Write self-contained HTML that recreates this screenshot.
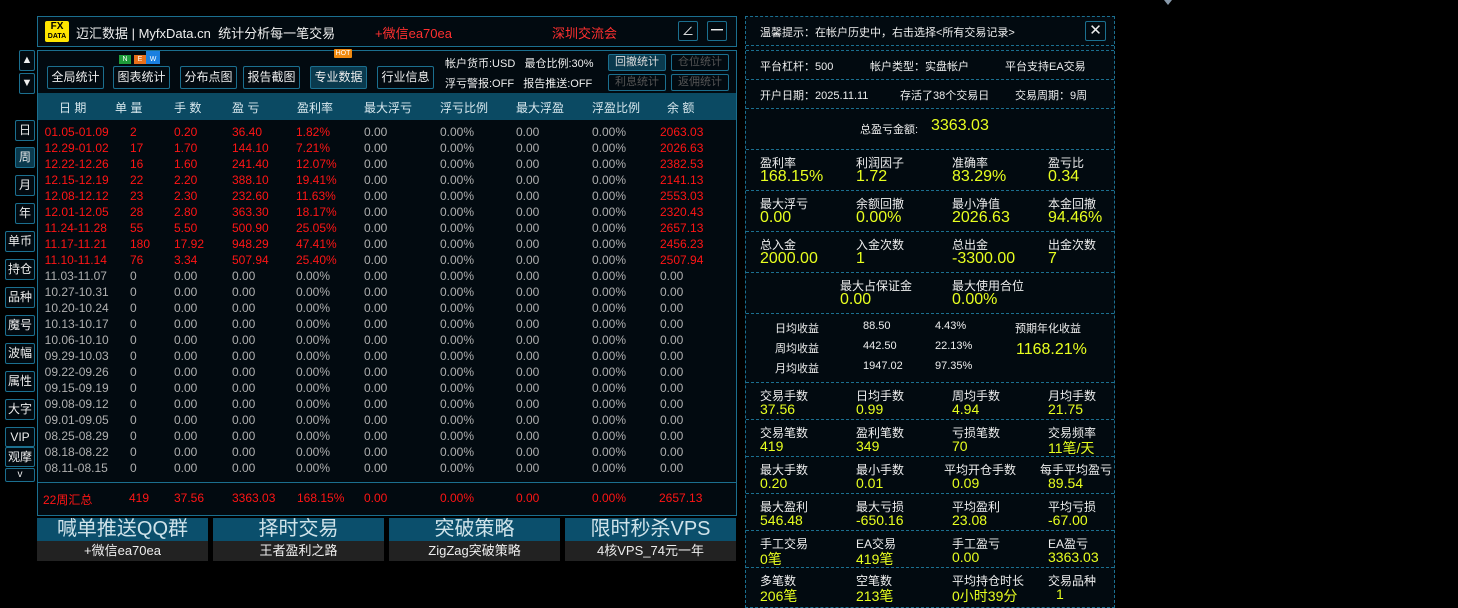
<!DOCTYPE html><html><head><meta charset="utf-8"><style>
*{margin:0;padding:0;box-sizing:border-box}
body{width:1458px;height:606px;background:#000;position:relative;overflow:hidden;font-family:"Liberation Sans","Noto Sans CJK SC",sans-serif;color:#e8e8e8;font-size:12px}
.a{position:absolute;white-space:nowrap}
.box{position:absolute;border:1px solid #1b6f8f;background:#020a10}
.btn{position:absolute;border:1px solid #1b6f8f;background:#020a10;color:#eee;text-align:center;font-size:12px;border-radius:2px}
.tb{position:absolute;top:66px;height:23px;line-height:21px;border:1px solid #1b6f8f;color:#eee;text-align:center;font-size:12px;border-radius:2px}
.sm{position:absolute;height:17px;line-height:15px;width:58px;border:1px solid #1b6f8f;font-size:11px;text-align:center;color:#555;border-radius:2px}
table{position:absolute;left:38px;top:124px;border-collapse:collapse;font-size:12px}
td{height:16px;padding:0;white-space:nowrap}
.r td{color:#ff1515}.g td{color:#b0b0b0}
.rp{position:absolute;left:745px;top:16px;width:370px;height:592px;border:1px dashed #1b6f8f;background:#020a10}
.hl{position:absolute;left:746px;width:368px;border-top:1px dashed #1b6f8f}
.l{position:absolute;font-size:12px;color:#eee;white-space:nowrap}
.v{position:absolute;font-size:16px;color:#e8ff20;white-space:nowrap}
.ad{position:absolute;top:518px;width:171px}
.ad .t{background:#0b4f6c;height:23px;line-height:23px;text-align:center;color:#cfe3ea;font-size:20px}
.ad .b{background:#222;height:20px;line-height:20px;text-align:center;color:#eee;font-size:13px}
</style></head><body>
<div class="a" style="left:1164px;top:0;width:0;height:0;border-left:4px solid transparent;border-right:4px solid transparent;border-top:5px solid #8899aa"></div>

<div class="box" style="left:37px;top:16px;width:700px;height:31px"></div>
<div class="a" style="left:45px;top:21px;width:24px;height:21px;background:#ffe600;border-radius:2px;color:#000;font-weight:bold;font-size:10px;line-height:9px;text-align:center;padding-top:1px">FX<br><span style="font-size:7px">DATA</span></div>
<div class="a" style="left:76px;top:23px;font-size:13px;color:#eee">迈汇数据 | MyfxData.cn &nbsp;统计分析每一笔交易</div>
<div class="a" style="left:375px;top:23px;font-size:13px;color:#ff3030">+微信ea70ea</div>
<div class="a" style="left:552px;top:23px;font-size:13px;color:#ff3030">深圳交流会</div>
<div class="btn" style="left:678px;top:21px;width:20px;height:20px;line-height:18px">∠</div>
<div class="btn" style="left:707px;top:21px;width:20px;height:20px;line-height:16px;font-weight:bold">━</div>

<div class="btn" style="left:19px;top:50px;width:16px;height:21px;line-height:19px;font-size:11px">▲</div>
<div class="btn" style="left:19px;top:73px;width:16px;height:21px;line-height:19px;font-size:11px">▼</div>

<div class="box" style="left:37px;top:50px;width:700px;height:466px"></div>
<div class="tb" style="left:47px;width:57px">全局统计</div>
<div class="tb" style="left:113px;width:57px">图表统计</div>
<div class="tb" style="left:180px;width:57px">分布点图</div>
<div class="tb" style="left:243px;width:57px">报告截图</div>
<div class="tb" style="left:310px;width:57px;background:#0a3a4e">专业数据</div>
<div class="tb" style="left:377px;width:57px">行业信息</div>
<div class="a" style="left:119px;top:55px;width:12px;height:9px;background:#1e9c3a;font-size:7px;color:#fff;text-align:center;line-height:9px">N</div>
<div class="a" style="left:134px;top:55px;width:12px;height:9px;background:#e8701a;font-size:7px;color:#fff;text-align:center;line-height:9px">E</div>
<div class="a" style="left:146px;top:51px;width:14px;height:13px;background:#1a80e0;font-size:7px;color:#fff;text-align:center;line-height:17px">W</div>
<div class="a" style="left:334px;top:49px;width:18px;height:9px;background:#f08a10;font-size:7px;color:#fff;text-align:center;line-height:9px;border-radius:1px">HOT</div>
<div class="l" style="left:445px;top:55px;font-size:11px">帐户货币:USD &nbsp;&nbsp;最仓比例:30%</div>
<div class="l" style="left:445px;top:75px;font-size:11px">浮亏警报:OFF &nbsp;&nbsp;报告推送:OFF</div>
<div class="sm" style="left:608px;top:54px;color:#ddd;background:#0a3a4e">回撤统计</div>
<div class="sm" style="left:671px;top:54px">仓位统计</div>
<div class="sm" style="left:608px;top:74px">利息统计</div>
<div class="sm" style="left:671px;top:74px">返佣统计</div>

<div class="a" style="left:38px;top:93px;width:698px;height:27px;background:#0b4a63"></div>
<div class="a" style="top:99px;left:0;width:740px;font-size:12px;color:#d8e8ee">
<span class="a" style="left:59px">日 期</span><span class="a" style="left:115px">单 量</span><span class="a" style="left:174px">手 数</span><span class="a" style="left:232px">盈 亏</span><span class="a" style="left:297px">盈利率</span><span class="a" style="left:364px">最大浮亏</span><span class="a" style="left:440px">浮亏比例</span><span class="a" style="left:516px">最大浮盈</span><span class="a" style="left:592px">浮盈比例</span><span class="a" style="left:667px">余 额</span></div>

<table>
<colgroup><col style="width:92px"><col style="width:44px"><col style="width:58px"><col style="width:64px"><col style="width:68px"><col style="width:76px"><col style="width:76px"><col style="width:76px"><col style="width:68px"><col></colgroup>
<tr class="r"><td>&nbsp;&nbsp;01.05-01.09</td><td>2</td><td>0.20</td><td>36.40</td><td>1.82%</td><td style="color:#b0b0b0">0.00</td><td style="color:#b0b0b0">0.00%</td><td style="color:#b0b0b0">0.00</td><td style="color:#b0b0b0">0.00%</td><td>2063.03</td></tr>
<tr class="r"><td>&nbsp;&nbsp;12.29-01.02</td><td>17</td><td>1.70</td><td>144.10</td><td>7.21%</td><td style="color:#b0b0b0">0.00</td><td style="color:#b0b0b0">0.00%</td><td style="color:#b0b0b0">0.00</td><td style="color:#b0b0b0">0.00%</td><td>2026.63</td></tr>
<tr class="r"><td>&nbsp;&nbsp;12.22-12.26</td><td>16</td><td>1.60</td><td>241.40</td><td>12.07%</td><td style="color:#b0b0b0">0.00</td><td style="color:#b0b0b0">0.00%</td><td style="color:#b0b0b0">0.00</td><td style="color:#b0b0b0">0.00%</td><td>2382.53</td></tr>
<tr class="r"><td>&nbsp;&nbsp;12.15-12.19</td><td>22</td><td>2.20</td><td>388.10</td><td>19.41%</td><td style="color:#b0b0b0">0.00</td><td style="color:#b0b0b0">0.00%</td><td style="color:#b0b0b0">0.00</td><td style="color:#b0b0b0">0.00%</td><td>2141.13</td></tr>
<tr class="r"><td>&nbsp;&nbsp;12.08-12.12</td><td>23</td><td>2.30</td><td>232.60</td><td>11.63%</td><td style="color:#b0b0b0">0.00</td><td style="color:#b0b0b0">0.00%</td><td style="color:#b0b0b0">0.00</td><td style="color:#b0b0b0">0.00%</td><td>2553.03</td></tr>
<tr class="r"><td>&nbsp;&nbsp;12.01-12.05</td><td>28</td><td>2.80</td><td>363.30</td><td>18.17%</td><td style="color:#b0b0b0">0.00</td><td style="color:#b0b0b0">0.00%</td><td style="color:#b0b0b0">0.00</td><td style="color:#b0b0b0">0.00%</td><td>2320.43</td></tr>
<tr class="r"><td>&nbsp;&nbsp;11.24-11.28</td><td>55</td><td>5.50</td><td>500.90</td><td>25.05%</td><td style="color:#b0b0b0">0.00</td><td style="color:#b0b0b0">0.00%</td><td style="color:#b0b0b0">0.00</td><td style="color:#b0b0b0">0.00%</td><td>2657.13</td></tr>
<tr class="r"><td>&nbsp;&nbsp;11.17-11.21</td><td>180</td><td>17.92</td><td>948.29</td><td>47.41%</td><td style="color:#b0b0b0">0.00</td><td style="color:#b0b0b0">0.00%</td><td style="color:#b0b0b0">0.00</td><td style="color:#b0b0b0">0.00%</td><td>2456.23</td></tr>
<tr class="r"><td>&nbsp;&nbsp;11.10-11.14</td><td>76</td><td>3.34</td><td>507.94</td><td>25.40%</td><td style="color:#b0b0b0">0.00</td><td style="color:#b0b0b0">0.00%</td><td style="color:#b0b0b0">0.00</td><td style="color:#b0b0b0">0.00%</td><td>2507.94</td></tr>
<tr class="g"><td>&nbsp;&nbsp;11.03-11.07</td><td>0</td><td>0.00</td><td>0.00</td><td>0.00%</td><td>0.00</td><td>0.00%</td><td>0.00</td><td>0.00%</td><td>0.00</td></tr>
<tr class="g"><td>&nbsp;&nbsp;10.27-10.31</td><td>0</td><td>0.00</td><td>0.00</td><td>0.00%</td><td>0.00</td><td>0.00%</td><td>0.00</td><td>0.00%</td><td>0.00</td></tr>
<tr class="g"><td>&nbsp;&nbsp;10.20-10.24</td><td>0</td><td>0.00</td><td>0.00</td><td>0.00%</td><td>0.00</td><td>0.00%</td><td>0.00</td><td>0.00%</td><td>0.00</td></tr>
<tr class="g"><td>&nbsp;&nbsp;10.13-10.17</td><td>0</td><td>0.00</td><td>0.00</td><td>0.00%</td><td>0.00</td><td>0.00%</td><td>0.00</td><td>0.00%</td><td>0.00</td></tr>
<tr class="g"><td>&nbsp;&nbsp;10.06-10.10</td><td>0</td><td>0.00</td><td>0.00</td><td>0.00%</td><td>0.00</td><td>0.00%</td><td>0.00</td><td>0.00%</td><td>0.00</td></tr>
<tr class="g"><td>&nbsp;&nbsp;09.29-10.03</td><td>0</td><td>0.00</td><td>0.00</td><td>0.00%</td><td>0.00</td><td>0.00%</td><td>0.00</td><td>0.00%</td><td>0.00</td></tr>
<tr class="g"><td>&nbsp;&nbsp;09.22-09.26</td><td>0</td><td>0.00</td><td>0.00</td><td>0.00%</td><td>0.00</td><td>0.00%</td><td>0.00</td><td>0.00%</td><td>0.00</td></tr>
<tr class="g"><td>&nbsp;&nbsp;09.15-09.19</td><td>0</td><td>0.00</td><td>0.00</td><td>0.00%</td><td>0.00</td><td>0.00%</td><td>0.00</td><td>0.00%</td><td>0.00</td></tr>
<tr class="g"><td>&nbsp;&nbsp;09.08-09.12</td><td>0</td><td>0.00</td><td>0.00</td><td>0.00%</td><td>0.00</td><td>0.00%</td><td>0.00</td><td>0.00%</td><td>0.00</td></tr>
<tr class="g"><td>&nbsp;&nbsp;09.01-09.05</td><td>0</td><td>0.00</td><td>0.00</td><td>0.00%</td><td>0.00</td><td>0.00%</td><td>0.00</td><td>0.00%</td><td>0.00</td></tr>
<tr class="g"><td>&nbsp;&nbsp;08.25-08.29</td><td>0</td><td>0.00</td><td>0.00</td><td>0.00%</td><td>0.00</td><td>0.00%</td><td>0.00</td><td>0.00%</td><td>0.00</td></tr>
<tr class="g"><td>&nbsp;&nbsp;08.18-08.22</td><td>0</td><td>0.00</td><td>0.00</td><td>0.00%</td><td>0.00</td><td>0.00%</td><td>0.00</td><td>0.00%</td><td>0.00</td></tr>
<tr class="g"><td>&nbsp;&nbsp;08.11-08.15</td><td>0</td><td>0.00</td><td>0.00</td><td>0.00%</td><td>0.00</td><td>0.00%</td><td>0.00</td><td>0.00%</td><td>0.00</td></tr>
</table>
<div class="a" style="left:38px;top:482px;width:698px;border-top:1px solid #1b6f8f"></div>
<div class="a" style="top:491px;left:0;font-size:12px;color:#ff1515">
<span class="a" style="left:43px">22周汇总</span><span class="a" style="left:129px">419</span><span class="a" style="left:174px">37.56</span><span class="a" style="left:232px">3363.03</span><span class="a" style="left:297px">168.15%</span><span class="a" style="left:364px">0.00</span><span class="a" style="left:440px">0.00%</span><span class="a" style="left:516px">0.00</span><span class="a" style="left:592px">0.00%</span><span class="a" style="left:659px">2657.13</span></div>

<div class="ad" style="left:37px"><div class="t">喊单推送QQ群</div><div class="b">+微信ea70ea</div></div>
<div class="ad" style="left:213px"><div class="t">择时交易</div><div class="b">王者盈利之路</div></div>
<div class="ad" style="left:389px"><div class="t">突破策略</div><div class="b">ZigZag突破策略</div></div>
<div class="ad" style="left:565px"><div class="t">限时秒杀VPS</div><div class="b">4核VPS_74元一年</div></div>

<div class="btn" style="left:15px;top:120px;width:20px;height:21px;line-height:19px">日</div>
<div class="btn" style="left:15px;top:147px;width:20px;height:21px;line-height:19px;background:#0a3a4e">周</div>
<div class="btn" style="left:15px;top:175px;width:20px;height:21px;line-height:19px">月</div>
<div class="btn" style="left:15px;top:203px;width:20px;height:21px;line-height:19px">年</div>
<div class="btn" style="left:5px;top:231px;width:30px;height:21px;line-height:19px">单币</div>
<div class="btn" style="left:5px;top:259px;width:30px;height:21px;line-height:19px">持仓</div>
<div class="btn" style="left:5px;top:287px;width:30px;height:21px;line-height:19px">品种</div>
<div class="btn" style="left:5px;top:315px;width:30px;height:21px;line-height:19px">魔号</div>
<div class="btn" style="left:5px;top:343px;width:30px;height:21px;line-height:19px">波幅</div>
<div class="btn" style="left:5px;top:371px;width:30px;height:21px;line-height:19px">属性</div>
<div class="btn" style="left:5px;top:399px;width:30px;height:21px;line-height:19px">大字</div>
<div class="btn" style="left:5px;top:427px;width:30px;height:20px;line-height:18px">VIP</div>
<div class="btn" style="left:5px;top:447px;width:30px;height:20px;line-height:18px">观摩</div>
<div class="btn" style="left:5px;top:468px;width:30px;height:14px;line-height:12px;font-size:10px">v</div>

<div class="rp"></div>
<div class="hl" style="top:45px"></div><div class="hl" style="top:50px"></div><div class="hl" style="top:79px"></div><div class="hl" style="top:108px"></div><div class="hl" style="top:149px"></div><div class="hl" style="top:190px"></div><div class="hl" style="top:231px"></div><div class="hl" style="top:272px"></div><div class="hl" style="top:313px"></div><div class="hl" style="top:382px"></div><div class="hl" style="top:419px"></div><div class="hl" style="top:456px"></div><div class="hl" style="top:493px"></div><div class="hl" style="top:530px"></div><div class="hl" style="top:567px"></div>
<div class="l" style="left:760px;top:24px;font-size:11px">温馨提示：在帐户历史中，右击选择&lt;所有交易记录&gt;</div>
<div class="btn" style="left:1085px;top:21px;width:21px;height:20px;line-height:18px;font-size:15px">✕</div>
<div class="l" style="left:760px;top:58px;font-size:11px">平台杠杆：500</div>
<div class="l" style="left:870px;top:58px;font-size:11px">帐户类型：实盘帐户</div>
<div class="l" style="left:1005px;top:58px;font-size:11px">平台支持EA交易</div>
<div class="l" style="left:760px;top:87px;font-size:11px">开户日期：2025.11.11</div>
<div class="l" style="left:900px;top:87px;font-size:11px">存活了38个交易日</div>
<div class="l" style="left:1015px;top:87px;font-size:11px">交易周期：9周</div>
<div class="l" style="left:860px;top:121px;font-size:11px">总盈亏金额:</div>
<div class="v" style="left:931px;top:117px">3363.03</div>

<div class="l" style="left:760px;top:154px">盈利率</div><div class="l" style="left:856px;top:154px">利润因子</div><div class="l" style="left:952px;top:154px">准确率</div><div class="l" style="left:1048px;top:154px">盈亏比</div>
<div class="v" style="left:760px;top:168px">168.15%</div><div class="v" style="left:856px;top:168px">1.72</div><div class="v" style="left:952px;top:168px">83.29%</div><div class="v" style="left:1048px;top:168px">0.34</div>
<div class="l" style="left:760px;top:195px">最大浮亏</div><div class="l" style="left:856px;top:195px">余额回撤</div><div class="l" style="left:952px;top:195px">最小净值</div><div class="l" style="left:1048px;top:195px">本金回撤</div>
<div class="v" style="left:760px;top:209px">0.00</div><div class="v" style="left:856px;top:209px">0.00%</div><div class="v" style="left:952px;top:209px">2026.63</div><div class="v" style="left:1048px;top:209px">94.46%</div>
<div class="l" style="left:760px;top:236px">总入金</div><div class="l" style="left:856px;top:236px">入金次数</div><div class="l" style="left:952px;top:236px">总出金</div><div class="l" style="left:1048px;top:236px">出金次数</div>
<div class="v" style="left:760px;top:250px">2000.00</div><div class="v" style="left:856px;top:250px">1</div><div class="v" style="left:952px;top:250px">-3300.00</div><div class="v" style="left:1048px;top:250px">7</div>
<div class="l" style="left:840px;top:277px">最大占保证金</div><div class="l" style="left:952px;top:277px">最大使用合位</div>
<div class="v" style="left:840px;top:291px">0.00</div><div class="v" style="left:952px;top:291px">0.00%</div>

<div class="l" style="left:775px;top:320px;font-size:11px">日均收益</div><div class="l" style="left:863px;top:320px;font-size:11px">88.50</div><div class="l" style="left:935px;top:320px;font-size:11px">4.43%</div>
<div class="l" style="left:775px;top:340px;font-size:11px">周均收益</div><div class="l" style="left:863px;top:340px;font-size:11px">442.50</div><div class="l" style="left:935px;top:340px;font-size:11px">22.13%</div>
<div class="l" style="left:775px;top:360px;font-size:11px">月均收益</div><div class="l" style="left:863px;top:360px;font-size:11px">1947.02</div><div class="l" style="left:935px;top:360px;font-size:11px">97.35%</div>
<div class="l" style="left:1015px;top:320px;font-size:11px">预期年化收益</div>
<div class="v" style="left:1016px;top:341px">1168.21%</div>

<div class="l" style="left:760px;top:387px">交易手数</div><div class="l" style="left:856px;top:387px">日均手数</div><div class="l" style="left:952px;top:387px">周均手数</div><div class="l" style="left:1048px;top:387px">月均手数</div>
<div class="v" style="left:760px;top:401px;font-size:14px">37.56</div><div class="v" style="left:856px;top:401px;font-size:14px">0.99</div><div class="v" style="left:952px;top:401px;font-size:14px">4.94</div><div class="v" style="left:1048px;top:401px;font-size:14px">21.75</div>
<div class="l" style="left:760px;top:424px">交易笔数</div><div class="l" style="left:856px;top:424px">盈利笔数</div><div class="l" style="left:952px;top:424px">亏损笔数</div><div class="l" style="left:1048px;top:424px">交易频率</div>
<div class="v" style="left:760px;top:438px;font-size:14px">419</div><div class="v" style="left:856px;top:438px;font-size:14px">349</div><div class="v" style="left:952px;top:438px;font-size:14px">70</div><div class="v" style="left:1048px;top:438px;font-size:14px">11笔/天</div>
<div class="l" style="left:760px;top:461px">最大手数</div><div class="l" style="left:856px;top:461px">最小手数</div><div class="l" style="left:944px;top:461px">平均开仓手数</div><div class="l" style="left:1040px;top:461px">每手平均盈亏</div>
<div class="v" style="left:760px;top:475px;font-size:14px">0.20</div><div class="v" style="left:856px;top:475px;font-size:14px">0.01</div><div class="v" style="left:952px;top:475px;font-size:14px">0.09</div><div class="v" style="left:1048px;top:475px;font-size:14px">89.54</div>
<div class="l" style="left:760px;top:498px">最大盈利</div><div class="l" style="left:856px;top:498px">最大亏损</div><div class="l" style="left:952px;top:498px">平均盈利</div><div class="l" style="left:1048px;top:498px">平均亏损</div>
<div class="v" style="left:760px;top:512px;font-size:14px">546.48</div><div class="v" style="left:856px;top:512px;font-size:14px">-650.16</div><div class="v" style="left:952px;top:512px;font-size:14px">23.08</div><div class="v" style="left:1048px;top:512px;font-size:14px">-67.00</div>
<div class="l" style="left:760px;top:535px">手工交易</div><div class="l" style="left:856px;top:535px">EA交易</div><div class="l" style="left:952px;top:535px">手工盈亏</div><div class="l" style="left:1048px;top:535px">EA盈亏</div>
<div class="v" style="left:760px;top:549px;font-size:14px">0笔</div><div class="v" style="left:856px;top:549px;font-size:14px">419笔</div><div class="v" style="left:952px;top:549px;font-size:14px">0.00</div><div class="v" style="left:1048px;top:549px;font-size:14px">3363.03</div>
<div class="l" style="left:760px;top:572px">多笔数</div><div class="l" style="left:856px;top:572px">空笔数</div><div class="l" style="left:952px;top:572px">平均持仓时长</div><div class="l" style="left:1048px;top:572px">交易品种</div>
<div class="v" style="left:760px;top:586px;font-size:14px">206笔</div><div class="v" style="left:856px;top:586px;font-size:14px">213笔</div><div class="v" style="left:952px;top:586px;font-size:14px">0小时39分</div><div class="v" style="left:1056px;top:586px;font-size:14px">1</div>
</body></html>
